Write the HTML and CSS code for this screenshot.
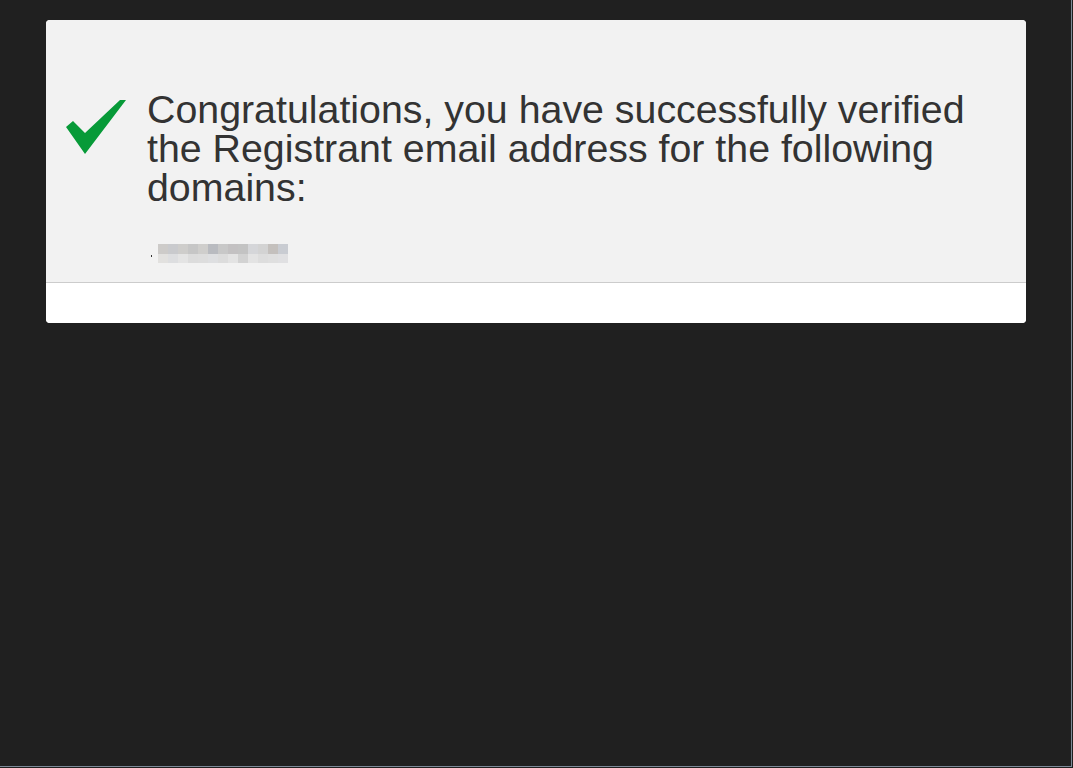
FILE: index.html
```html
<!DOCTYPE html>
<html lang="en">
<head>
<meta charset="utf-8">
<title>Verification</title>
<link rel="stylesheet" href="styles.css">
</head>
<body>
<div class="page">
  <div class="card">
    <div class="card-body">
      <div class="icon">
        <svg width="60" height="56" viewBox="0 0 60 56">
          <polygon points="0,27 7,21 19,33 54,0 60,0 19,54" fill="#079a38"/>
        </svg>
      </div>
      <div class="content">
        <h1 class="title">Congratulations, you have successfully verified the Registrant email address for the following domains:</h1>
        <div class="domain">
          <span class="bullet"></span>
          <span class="blur">
            <span class="blur-row top"></span>
            <span class="blur-row bottom"></span>
          </span>
        </div>
      </div>
    </div>
    <div class="card-footer"></div>
  </div>
</div>
</body>
</html>
```
FILE: styles.css
```css
html, body {
  margin: 0;
  padding: 0;
  background: #202020;
}
.page {
  width: 1072px;
  height: 767px;
  border-right: 1px solid #7d8a98;
  border-bottom: 1px solid #7d8a98;
  padding: 20px 0 0 46px;
  box-sizing: border-box;
  font-family: "Liberation Sans", Arial, sans-serif;
}
.card {
  width: 980px;
  border-radius: 4px;
  overflow: hidden;
  background: #ffffff;
}
.card-body {
  display: flex;
  background: #f2f2f2;
  padding: 70px 20px 19px 20px;
  border-bottom: 1px solid #cccccc;
}
.icon {
  width: 60px;
  height: 56px;
  margin-top: 10px;
  flex: none;
}
.icon svg { display: block; }
.content {
  margin-left: 21px;
  flex: 1;
}
.title {
  margin: 0;
  font-size: 39.35px;
  line-height: 39px;
  font-weight: normal;
  color: #333333;
}
.domain {
  display: flex;
  align-items: center;
  margin-top: 37px;
  height: 19px;
}
.bullet {
  width: 1px;
  height: 2px;
  background: #333;
  margin: 4px 6px 0 4px;
}
.blur {
  display: flex;
  flex-direction: column;
  width: 130px;
  height: 19px;
}
.blur-row {
  height: 9.5px;
}
.blur-row.top {
  background: linear-gradient(to right,
    #cdcbc9 0 10px, #c9cacd 10px 20px, #cecdcb 20px 30px, #c6c6c6 30px 40px,
    #cfcecc 40px 50px, #b9bbc0 50px 60px, #c8c8c8 60px 70px, #c3c1c2 70px 80px,
    #c3c3c3 80px 90px, #d5d6d9 90px 100px, #d3d3d3 100px 110px, #c4c0bd 110px 120px,
    #c9ccd2 120px 130px);
}
.blur-row.bottom {
  background: linear-gradient(to right,
    #e2e1df 0 10px, #dddee0 10px 20px, #e4e4e4 20px 30px, #dcdcdc 30px 40px,
    #dddddd 40px 50px, #dedfe1 50px 60px, #dcdcdc 60px 70px, #e3e3e3 70px 80px,
    #d2d2d2 80px 90px, #e3e3e3 90px 100px, #dddddd 100px 110px, #dfdfdf 110px 120px,
    #e0e0e2 120px 130px);
}
.card-footer {
  height: 40px;
  background: #ffffff;
}
```
